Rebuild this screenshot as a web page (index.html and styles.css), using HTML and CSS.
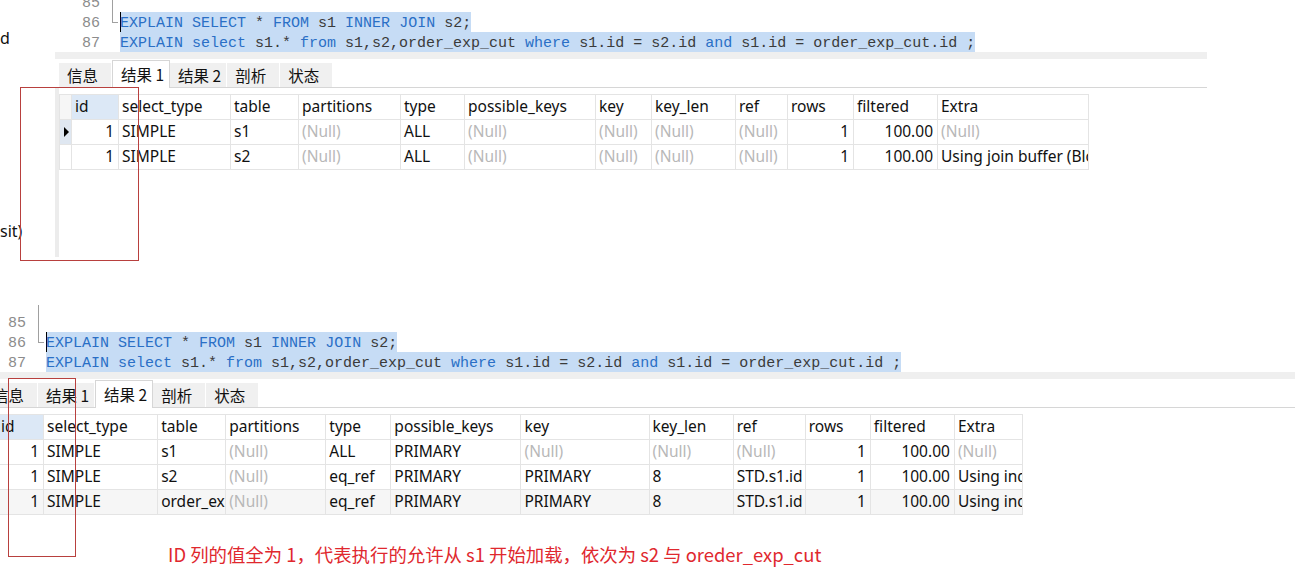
FILE: index.html
```html
<!DOCTYPE html>
<html lang="zh-CN">
<head>
<meta charset="utf-8">
<title>EXPLAIN</title>
<link rel="stylesheet" href="styles.css">
</head>
<body>
<div class="page">
  <section class="shot shot-top">
    <div class="side">
      <div class="frag frag-d">d</div>
      <div class="frag frag-sit">sit)</div>
    </div>
    <div class="pane pane-top">
      <div class="code">
        <div class="lines">
          <div class="line"><span class="ln">85</span><span class="fold fold-v"></span><span class="src"></span></div>
          <div class="line"><span class="ln">86</span><span class="fold fold-end"></span><span class="src sel cursor"><span class="kw">EXPLAIN</span> <span class="kw">SELECT</span> * <span class="kw">FROM</span> s1 <span class="kw">INNER</span> <span class="kw">JOIN</span> s2;</span></div>
          <div class="line"><span class="ln">87</span><span class="fold"></span><span class="src sel"><span class="kw">EXPLAIN</span> <span class="kw">select</span> s1.* <span class="kw">from</span> s1,s2,order_exp_cut <span class="kw">where</span> s1.id = s2.id <span class="kw">and</span> s1.id = order_exp_cut.id ;</span></div>
        </div>
      </div>
      <div class="bar"></div>
      <div class="tabs">
        <div class="tab">信息</div>
        <div class="tab active">结果 1</div>
        <div class="tab">结果 2</div>
        <div class="tab">剖析</div>
        <div class="tab">状态</div>
      </div>
      <div class="grid-area">
        <table class="result result-top">
          <colgroup>
            <col style="width:12px"><col style="width:47px"><col style="width:112px"><col style="width:68px"><col style="width:102px"><col style="width:64px"><col style="width:131px"><col style="width:56px"><col style="width:84px"><col style="width:52px"><col style="width:66px"><col style="width:84px"><col style="width:151px">
          </colgroup>
          <tr class="head">
            <td class="ind"></td><td class="cur">id</td><td>select_type</td><td>table</td><td>partitions</td><td>type</td><td>possible_keys</td><td>key</td><td>key_len</td><td>ref</td><td>rows</td><td>filtered</td><td>Extra</td>
          </tr>
          <tr>
            <td class="ind on"><span class="tri"></span></td><td class="num">1</td><td>SIMPLE</td><td>s1</td><td class="n">(Null)</td><td>ALL</td><td class="n">(Null)</td><td class="n">(Null)</td><td class="n">(Null)</td><td class="n">(Null)</td><td class="num">1</td><td class="num">100.00</td><td class="n">(Null)</td>
          </tr>
          <tr>
            <td class="ind"></td><td class="num">1</td><td>SIMPLE</td><td>s2</td><td class="n">(Null)</td><td>ALL</td><td class="n">(Null)</td><td class="n">(Null)</td><td class="n">(Null)</td><td class="n">(Null)</td><td class="num">1</td><td class="num">100.00</td><td>Using join buffer (Block Nested Loop)</td>
          </tr>
        </table>
      </div>
    </div>
  </section>

  <section class="shot shot-bottom">
    <div class="pane pane-bottom">
      <div class="code">
        <div class="lines">
          <div class="line"><span class="ln">85</span><span class="fold fold-v fold-top"></span><span class="src"></span></div>
          <div class="line"><span class="ln">86</span><span class="fold fold-end"></span><span class="src sel cursor"><span class="kw">EXPLAIN</span> <span class="kw">SELECT</span> * <span class="kw">FROM</span> s1 <span class="kw">INNER</span> <span class="kw">JOIN</span> s2;</span></div>
          <div class="line"><span class="ln">87</span><span class="fold"></span><span class="src sel"><span class="kw">EXPLAIN</span> <span class="kw">select</span> s1.* <span class="kw">from</span> s1,s2,order_exp_cut <span class="kw">where</span> s1.id = s2.id <span class="kw">and</span> s1.id = order_exp_cut.id ;</span></div>
        </div>
      </div>
      <div class="bar"></div>
      <div class="tabs">
        <div class="tab">信息</div>
        <div class="tab">结果 1</div>
        <div class="tab active">结果 2</div>
        <div class="tab">剖析</div>
        <div class="tab">状态</div>
      </div>
      <div class="grid-area">
        <table class="result result-bottom">
          <colgroup>
            <col style="width:12px"><col style="width:46px"><col style="width:114px"><col style="width:68px"><col style="width:100px"><col style="width:65px"><col style="width:130px"><col style="width:128px"><col style="width:84px"><col style="width:72px"><col style="width:65px"><col style="width:84px"><col style="width:68px">
          </colgroup>
          <tr class="head">
            <td class="ind"></td><td class="cur">id</td><td>select_type</td><td>table</td><td>partitions</td><td>type</td><td>possible_keys</td><td>key</td><td>key_len</td><td>ref</td><td>rows</td><td>filtered</td><td>Extra</td>
          </tr>
          <tr>
            <td class="ind"></td><td class="num">1</td><td>SIMPLE</td><td>s1</td><td class="n">(Null)</td><td>ALL</td><td>PRIMARY</td><td class="n">(Null)</td><td class="n">(Null)</td><td class="n">(Null)</td><td class="num">1</td><td class="num">100.00</td><td class="n">(Null)</td>
          </tr>
          <tr>
            <td class="ind"></td><td class="num">1</td><td>SIMPLE</td><td>s2</td><td class="n">(Null)</td><td>eq_ref</td><td>PRIMARY</td><td>PRIMARY</td><td>8</td><td>STD.s1.id</td><td class="num">1</td><td class="num">100.00</td><td>Using index</td>
          </tr>
          <tr class="alt">
            <td class="ind on"><span class="tri"></span></td><td class="num">1</td><td>SIMPLE</td><td>order_exp_cut</td><td class="n">(Null)</td><td>eq_ref</td><td>PRIMARY</td><td>PRIMARY</td><td>8</td><td>STD.s1.id</td><td class="num">1</td><td class="num">100.00</td><td>Using index</td>
          </tr>
        </table>
      </div>
    </div>
  </section>

  <p class="caption">ID 列的值全为 1，代表执行的允许从 s1 开始加载，依次为 s2 与 oreder_exp_cut</p>

  <div class="mark mark-1"></div>
  <div class="mark mark-2"></div>
</div>
</body>
</html>
```

FILE: styles.css
```css
html, body {
  margin: 0;
  padding: 0;
  background: #ffffff;
}

body {
  font-family: "Noto Sans", "Noto Sans CJK SC", sans-serif;
  color: #000000;
}

.page {
  position: relative;
  width: 1304px;
  height: 577px;
  overflow: hidden;
}

/* ---------- sections ---------- */
.shot-top {
  display: flex;
  height: 305px;
}

.side {
  width: 55px;
  flex: none;
  font-size: 16px;
  line-height: 20px;
  color: #111;
}

.frag-d {
  margin-top: 28px;
}

.frag-sit {
  margin-top: 173px;
}

.pane {
  flex: none;
  display: flex;
  flex-direction: column;
}

.pane-top {
  width: 1152px;
}

.pane-bottom {
  width: 1314px;
  margin-left: -19px;
}

/* ---------- code editor ---------- */
.code {
  overflow: hidden;
  font-family: "Liberation Mono", monospace;
  font-size: 15px;
  line-height: 24px;
  background: #fff;
}

.pane-top .code {
  height: 52px;
}

.pane-top .lines {
  margin-top: -8px;
}

.pane-bottom .code {
  height: 67px;
  padding-top: 7px;
  box-sizing: border-box;
}

.line {
  display: flex;
  height: 20px;
  white-space: pre;
}

.ln {
  width: 45px;
  flex: none;
  text-align: right;
  color: #8c8c8c;
}

.fold {
  width: 20px;
  flex: none;
  position: relative;
}

.fold-v::before {
  content: "";
  position: absolute;
  left: 12px;
  top: 0;
  bottom: 0;
  width: 1px;
  background: #a0a0a0;
}

.fold-top::before {
  top: -7px;
}

.fold-end::before {
  content: "";
  position: absolute;
  left: 12px;
  top: 0;
  height: 10px;
  width: 1px;
  background: #a0a0a0;
}

.fold-end::after {
  content: "";
  position: absolute;
  left: 12px;
  top: 10px;
  width: 6px;
  height: 1px;
  background: #a0a0a0;
}

.src {
  color: #3a3a3a;
}

.sel {
  display: inline-block;
  height: 20px;
  background: #c6dcf5;
}

.cursor {
  box-shadow: inset 1px 0 0 #000;
}

.kw {
  color: #2a6fc6;
}

/* ---------- gray bar + tabs ---------- */
.bar {
  height: 7px;
  background: #efefef;
}

.tabs {
  display: flex;
  align-items: flex-end;
  height: 28px;
  padding-left: 4px;
  border-bottom: 1px solid #d6d6d6;
}

.tab {
  height: 24px;
  line-height: 24px;
  min-width: 53px;
  box-sizing: border-box;
  padding: 0 5px 0 8px;
  background: #f0f0f0;
  border-right: 1px solid #ffffff;
  font-family: "Noto Sans CJK SC", sans-serif;
  font-size: 15.5px;
  color: #111;
  white-space: nowrap;
}

.tab.active {
  height: 28px;
  line-height: 26px;
  margin-bottom: -1px;
  background: #ffffff;
  border: 1px solid #d6d6d6;
  border-bottom: none;
}

/* ---------- result grid ---------- */
.grid-area {
  padding-top: 6px;
  border-left: 4px solid #ececec;
}

.pane-top .grid-area {
  height: 163px;
}

.result {
  border-collapse: collapse;
  table-layout: fixed;
  font-family: "Noto Sans", sans-serif;
  font-size: 15.5px;
}

.result-top {
  width: 1029px;
}

.result-bottom {
  width: 1038px;
}

.result tr {
  height: 25px;
}

.result td {
  height: 22px;
  padding: 0 4px 2px 3px;
  border: 1px solid #e4e4e4;
  white-space: nowrap;
  overflow: hidden;
  text-overflow: clip;
  line-height: 20px;
  color: #111;
}

.result td.ind {
  padding: 0;
  height: 24px;
  background: #f6f6f6;
}

.result tr:not(.head) td.ind {
  background: #ffffff;
}

.result tr td.ind.on {
  background: #dfe7f1;
}

.tri {
  display: block;
  width: 0;
  height: 0;
  margin-left: 4px;
  border-left: 5px solid #000;
  border-top: 5px solid transparent;
  border-bottom: 5px solid transparent;
}

.result td.cur {
  background: #dce8f6;
}

.result td.num {
  text-align: right;
}

.result td.n {
  color: #b8b8b8;
}

.result tr.alt td {
  background: #f6f6f6;
}

/* ---------- caption ---------- */
.caption {
  margin: 27px 0 0 168px;
  font-family: "Noto Sans CJK SC", sans-serif;
  font-size: 18.4px;
  line-height: 24px;
  color: #e0282e;
  white-space: nowrap;
}

/* ---------- annotation boxes ---------- */
.mark {
  position: absolute;
  box-sizing: border-box;
  border: 1px solid #b8403e;
}

.mark-1 {
  left: 20px;
  top: 87px;
  width: 119px;
  height: 174px;
}

.mark-2 {
  left: 8px;
  top: 378px;
  width: 68px;
  height: 179px;
}
```
